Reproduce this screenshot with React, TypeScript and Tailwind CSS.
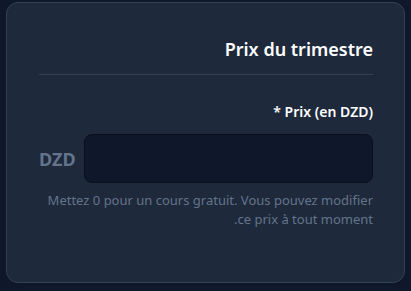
export default function App() {
  return (
    <div
      className="h-[291px] w-[411px] bg-[#0f172a] px-[6px] pt-[2px]"
      style={{ fontFamily: '"Noto Sans", "Open Sans", sans-serif' }}
    >
      <div className="h-[281px] rounded-xl border border-[#334155] bg-[#1e293b] pt-8 pr-[31px] pl-8">
        <div className="border-b border-[#334155] pb-[11px] text-right">
          <h2 className="text-lg leading-7 font-semibold text-white">Prix du trimestre</h2>
        </div>

        <label className="mt-[27px] block text-right text-sm leading-5 font-semibold text-white">
          * Prix (en DZD)
        </label>

        <div className="mt-3 flex items-center gap-2">
          <span className="text-lg font-bold text-[#64748b]">DZD</span>
          <input
            type="text"
            className="h-[49px] flex-1 rounded-lg border border-[#0a0f1c] bg-[#0f172a] px-3 text-white outline-none"
          />
        </div>

        <p dir="rtl" className="mt-2 text-right text-[13px] leading-[19px] text-[#64748b]">
          Mettez 0 pour un cours gratuit. Vous pouvez modifier ce prix à tout moment.
        </p>
      </div>
    </div>
  );
}
